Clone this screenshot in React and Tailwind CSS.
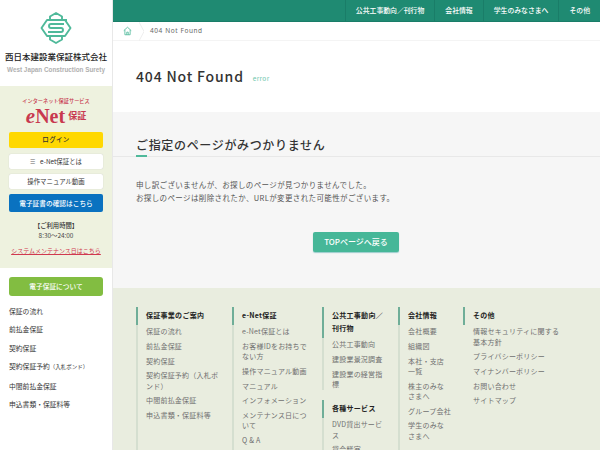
import React from "react";

const Logo = () => (
  <svg width="32" height="32" viewBox="0 0 32 32" fill="none" stroke="#4fb99a" strokeWidth="1.9" strokeLinejoin="round">
    <path d="M10 8 V4.5 L16 1 L22 4.5 V8" />
    <path d="M10 24 V27.5 L16 31 L22 27.5 V24" />
    <path d="M27 8 H7 L1.5 16 L7 24 H21" />
    <path d="M11 24 H25 L30.5 16 L25 8" />
    <path d="M24 12 H11 Q9 12 9 14 V14 Q9 16 11 16 H21 Q23 16 23 18 V18 Q23 20 21 20 H8" />
  </svg>
);

const nav = ["公共工事動向／刊行物", "会社情報", "学生のみなさまへ", "その他"];

const side = ["保証の流れ", "前払金保証", "契約保証", null, "中間前払金保証", "申込書類・保証料等"];

const Col = ({ title, items }) => (
  <div className="pl-[8px] pr-[12px] pt-[2px]">
    <p className="text-[7px] font-bold leading-[13px] tracking-[0.04em] text-[#222]">{title}</p>
    <ul className="mt-[4.3px] flex flex-col gap-[4.4px]">
      {items.map((t) => (
        <li key={t} className="text-[7px] leading-[10.3px] tracking-[0.03em] text-[#707070]">{t}</li>
      ))}
    </ul>
  </div>
);

const Column = ({ children, className = "" }) => (
  <div className={"relative border-l-2 border-[#d5dfd0] " + className}>{children}</div>
);

const Bar = ({ h }) => <span className={"absolute left-[-2px] top-0 w-[2px] bg-[#6fae98] " + h} />;

export default function App() {
  return (
    <div className="flex h-[450px] w-[600px] overflow-hidden bg-white text-[#333] font-['Noto_Sans_CJK_JP','Noto_Sans',sans-serif]">
      <aside className="flex w-[113px] shrink-0 flex-col border-r border-[#e8e8e8] bg-white">
        <div className="flex h-[86px] shrink-0 flex-col items-center pt-[12px]">
          <Logo />
          <p className="mt-[6px] whitespace-nowrap text-[8.5px] font-medium leading-[12px] text-[#222]">西日本建設業保証株式会社</p>
          <p className="mt-[4px] whitespace-nowrap font-['Liberation_Sans',sans-serif] text-[6.35px] font-bold leading-[8px] text-[#b0b0b0]">West Japan Construction Surety</p>
        </div>
        <div className="flex h-[182px] shrink-0 flex-col items-center bg-[#eef2df] px-[9px] pt-[11px]">
          <p className="whitespace-nowrap text-[5.2px] font-medium leading-[8px] text-[#c8394f]">インターネット保証サービス</p>
          <div className="mt-[1px] flex h-[20px] items-center font-['Liberation_Serif',serif] font-bold text-[#c8394f]">
            <span className="text-[21px] italic leading-none">e</span>
            <span className="text-[20px] leading-none">Net</span>
            <span className="ml-[3px] font-['Noto_Sans_CJK_JP',sans-serif] text-[9px]">保証</span>
          </div>
          <div className="mt-[6px] flex h-[16px] w-[94px] shrink-0 items-center justify-center rounded-[2px] bg-[#ffd800] text-[6.5px] font-medium tracking-[0.05em] text-[#333]">ログイン</div>
          <div className="mt-[6px] flex h-[15px] w-[94px] shrink-0 items-center justify-center gap-[5px] rounded-[2px] bg-white text-[6.4px] text-[#333] shadow-[0_0_1px_#bbb]">
            <span className="text-[6px] leading-none text-[#666]">☰</span>e-Net保証とは
          </div>
          <div className="mt-[5px] flex h-[15px] w-[94px] shrink-0 items-center justify-center rounded-[2px] bg-white text-[6.4px] text-[#333] shadow-[0_0_1px_#bbb]">操作マニュアル動画</div>
          <div className="mt-[5px] flex h-[18px] w-[94px] shrink-0 items-center justify-center rounded-[2px] bg-[#0a72c0] text-[6.7px] font-medium text-white">電子証書の確認はこちら</div>
          <p className="mt-[9px] text-[6.3px] font-medium leading-[10px] text-[#333]">【ご利用時間】</p>
          <p className="mt-[0px] text-[6.4px] leading-[10px] text-[#444]">8:30～24:00</p>
          <p className="mt-[5px] whitespace-nowrap text-[6px] leading-[9px] text-[#d0394f] underline">システムメンテナンス日はこちら</p>
        </div>
        <div className="flex flex-col px-[9px] pt-[9px]">
          <div className="flex h-[19px] w-[94px] items-center justify-center rounded-[3px] bg-[#82bd41] text-[6.7px] font-medium text-white">電子保証について</div>
          <ul className="mt-[10px] flex flex-col gap-[8.4px] text-[6.8px] leading-[10px] text-[#333]">
            {side.map((t, i) =>
              t ? (
                <li key={i}>{t}</li>
              ) : (
                <li key={i} className="whitespace-nowrap">
                  契約保証予約<span className="text-[5.5px]">（入札ボンド）</span>
                </li>
              )
            )}
          </ul>
        </div>
      </aside>

      <main className="flex min-w-0 flex-1 flex-col">
        <div className="flex h-[22px] shrink-0 items-center justify-end border-b border-[#1a7d68] bg-[#1f8a72] text-[6.85px] font-medium text-white">
          {nav.map((t) => (
            <div key={t} className="flex h-full items-center border-l border-[#1a7d68] px-[10px] whitespace-nowrap">{t}</div>
          ))}
        </div>
        <div className="flex h-[19px] shrink-0 items-center border-b border-[#f4f4f4] font-['Noto_Sans',sans-serif] text-[6.5px] tracking-[0.09em] text-[#666]">
          <div className="flex h-full w-[28px] items-center justify-center">
            <svg width="9" height="10" viewBox="0 0 24 24" fill="none" stroke="#4fb99a" strokeWidth="2.2">
              <path d="M2 11 L12 2 L22 11 M5 9 V22 H19 V9 M10 22 V15 H14 V22" />
            </svg>
          </div>
          <svg width="5" height="19" viewBox="0 0 5 19" fill="none" stroke="#eee" className="-ml-[2px] mr-[6px]">
            <path d="M0 0 L5 9.5 L0 19" />
          </svg>
          <span>404 Not Found</span>
        </div>
        <div className="flex h-[71px] shrink-0 items-center pb-[1px] pl-[23px]">
          <h1 className="text-[14px] font-medium leading-none tracking-[0.06em] text-[#333]">404 Not Found</h1>
          <span className="ml-[9px] mt-[5px] text-[6.5px] tracking-[0.05em] text-[#6fc7ae]">error</span>
        </div>
        <section className="flex h-[176px] shrink-0 flex-col bg-[#f6f6f6]">
          <div className="relative mt-[21px] h-[24px] border-b border-[#e8e8e8] pl-[23px]">
            <h2 className="text-[12px] font-medium leading-[24px] tracking-[0.055em] text-[#333]">ご指定のページがみつかりません</h2>
            <span className="absolute bottom-[-1px] left-[23px] h-[2px] w-[11px] bg-[#4fb99a]" />
          </div>
          <div className="mt-[21px] pl-[23px] text-[7.5px] leading-[13.3px] tracking-[0.05em] text-[#555]">
            <p>申し訳ございませんが、お探しのページが見つかりませんでした。</p>
            <p>お探しのページは削除されたか、URLが変更された可能性がございます。</p>
          </div>
          <div className="mt-[27px] flex pl-[200px]">
            <div className="flex h-[20px] w-[86px] items-center justify-center rounded-[2px] bg-[#46b798] text-[8px] font-medium text-white shadow-[0_1px_1px_#9cc]">TOPページへ戻る</div>
          </div>
        </section>
        <footer className="flex flex-1 items-start overflow-hidden bg-[#e9eddf] pl-[23px] pt-[19px]">
          <Column className="h-[200px] w-[96px] shrink-0">
            <Bar h="h-[18px]" />
            <Col title="保証事業のご案内" items={["保証の流れ", "前払金保証", "契約保証", "契約保証予約（入札ボンド）", "中間前払金保証", "申込書類・保証料等"]} />
          </Column>
          <Column className="h-[200px] w-[90px] shrink-0">
            <Bar h="h-[18px]" />
            <Col title="e-Net保証" items={["e-Net保証とは", "お客様IDをお持ちでない方", "操作マニュアル動画", "マニュアル", "インフォメーション", "メンテナンス日について", "Q & A"]} />
          </Column>
          <div className="w-[76px] shrink-0">
            <Column className="h-[83px]">
              <Bar h="h-[31px]" />
              <Col title="公共工事動向／刊行物" items={["公共工事動向", "建設業景況調査", "建設業の経営指標"]} />
            </Column>
            <Column className="mt-[10px] h-[100px]">
              <Bar h="h-[18px]" />
              <Col title="各種サービス" items={["DVD貸出サービス", "貸会議室"]} />
            </Column>
          </div>
          <Column className="h-[200px] w-[65px] shrink-0">
            <Bar h="h-[18px]" />
            <Col title="会社情報" items={["会社概要", "組織図", "本社・支店一覧", "株主のみなさまへ", "グループ会社", "学生のみなさまへ"]} />
          </Column>
          <Column className="h-[200px] w-[112px] shrink-0 border-transparent">
            <Bar h="h-[18px]" />
            <Col title="その他" items={["情報セキュリティに関する基本方針", "プライバシーポリシー", "マイナンバーポリシー", "お問い合わせ", "サイトマップ"]} />
          </Column>
        </footer>
      </main>
    </div>
  );
}
